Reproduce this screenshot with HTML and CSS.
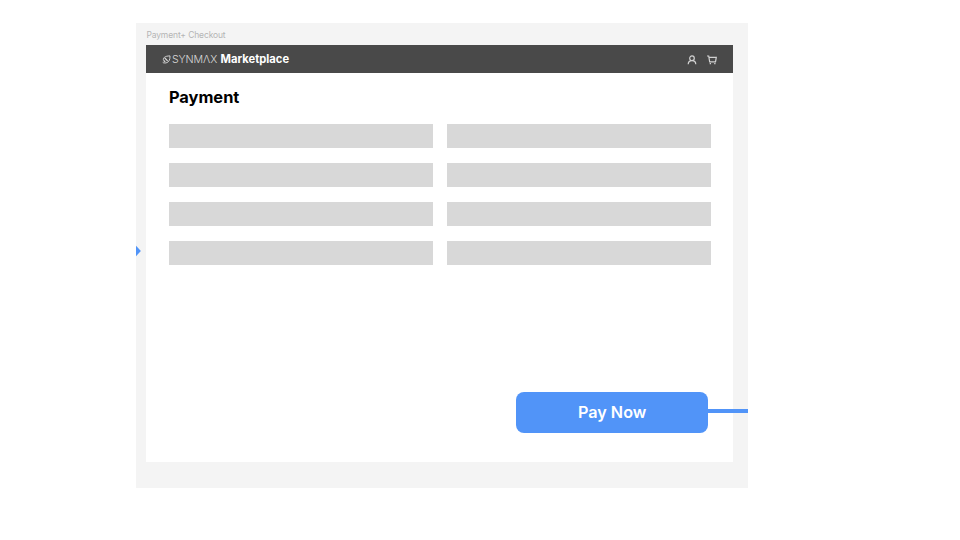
FILE: index.html
```html
<!DOCTYPE html>
<html lang="en">
<head>
<meta charset="utf-8">
<title>Payment + Checkout</title>
<link rel="stylesheet" href="styles.css">
</head>
<body>
<main class="canvas">
  <div class="frame-label">Payment+ Checkout</div>
  <section class="frame">
    <header class="topbar">
      <svg class="logo" viewBox="0 0 10 10" fill="none" stroke="#dcdcdc">
        <path d="M1.800 6C.6 3.500 3 1 8.900 1 9.200 5 7.500 8.300 4.500 8.800 2.800 9 1 8.700.8 8.200" stroke-width="1"/>
        <path d="M3 3.200 6.200 6.600M1.800 6 3.600 7.400" stroke-width="1.400"/>
      </svg>
      <span class="brand">SYNMΛX</span>
      <span class="product">Marketplace</span>
      <nav class="actions">
        <svg class="icon" viewBox="0 0 10 10" fill="none" stroke="#d2d2d2" stroke-width="1.200">
          <circle cx="5" cy="3.200" r="2.300"/>
          <path d="M1.200 9.300C1.300 7 2.800 5.700 5 5.700S8.700 7 8.800 9.300"/>
        </svg>
        <svg class="icon" viewBox="0 0 10 10" fill="none" stroke="#d2d2d2" stroke-width="1.200">
          <path d="M0 1H1.700L2.700 6.800H8.500L9.300 2.300H2"/>
          <path d="M2.700 8.700H4M7.200 8.700H8.500" stroke-width="1.300"/>
        </svg>
      </nav>
    </header>
    <div class="content">
      <h1 class="title">Payment</h1>
      <div class="fields">
        <div class="field"></div><div class="field"></div>
        <div class="field"></div><div class="field"></div>
        <div class="field"></div><div class="field"></div>
        <div class="field"></div><div class="field"></div>
      </div>
      <button class="pay">Pay Now</button>
    </div>
  </section>
  <svg class="arrow" viewBox="0 0 5 12"><path d="M0 .8 4.900 6 0 11.200Z" fill="#5194f8"/></svg>
  <div class="connector"></div>
</main>
</body>
</html>
```
FILE: styles.css
```css
* { box-sizing: border-box; }
body {
  margin: 0;
  padding: 23px 0 0 136px;
  background: #fff;
  font-family: Inter, "Liberation Sans", sans-serif;
}
.canvas {
  position: relative;
  width: 612px;
  height: 465px;
  padding: 5px 14.5px 0 10.4px;
  background: #f4f4f4;
}
.frame-label {
  height: 16.5px;
  font-size: 8.500px;
  letter-spacing: -.13px;
  line-height: 14px;
  color: #b5b5b5;
  white-space: nowrap;
}
.frame {
  display: flex;
  flex-direction: column;
  width: 587px;
  height: 417.5px;
  background: #fff;
}
.topbar {
  display: flex;
  align-items: center;
  height: 28.5px;
  padding: 1px 16px 0;
  background: #494949;
  white-space: nowrap;
}
.logo { width: 9px; height: 9px; }
.brand {
  width: 49.200px;
  padding-left: .5px;
  font-size: 10.700px;
  font-weight: 300;
  letter-spacing: -.1px;
  color: #d8d8d8;
}
.product {
  font-size: 11.200px;
  font-weight: 700;
  color: #fff;
}
.actions {
  display: flex;
  gap: 10px;
  margin-left: auto;
}
.icon { width: 10px; height: 10px; margin-top: 1px; }
.content {
  display: flex;
  flex: 1;
  flex-direction: column;
  padding: 14px 22px 29px 22.5px;
}
.title {
  margin: 0 0 16.5px;
  font-size: 16.400px;
  font-weight: 700;
  line-height: 20px;
  color: #000;
}
.fields {
  display: grid;
  grid-template-columns: 264px 264px;
  grid-auto-rows: 24.5px;
  gap: 14.5px;
}
.field {
  background: #d8d8d8;
}
.pay {
  width: 191.5px;
  height: 41px;
  margin: auto 3.5px 0 auto;
  padding: 0;
  border: 0;
  border-radius: 8px;
  background: #5194f8;
  color: #fff;
  font: 600 16.200px/41px Inter, "Liberation Sans", sans-serif;
}
.arrow {
  position: absolute;
  left: 0;
  top: 222px;
  width: 5px;
  height: 12px;
}
.connector {
  position: absolute;
  right: 0;
  top: 386px;
  width: 41px;
  height: 4px;
  background: #5194f8;
}
```
